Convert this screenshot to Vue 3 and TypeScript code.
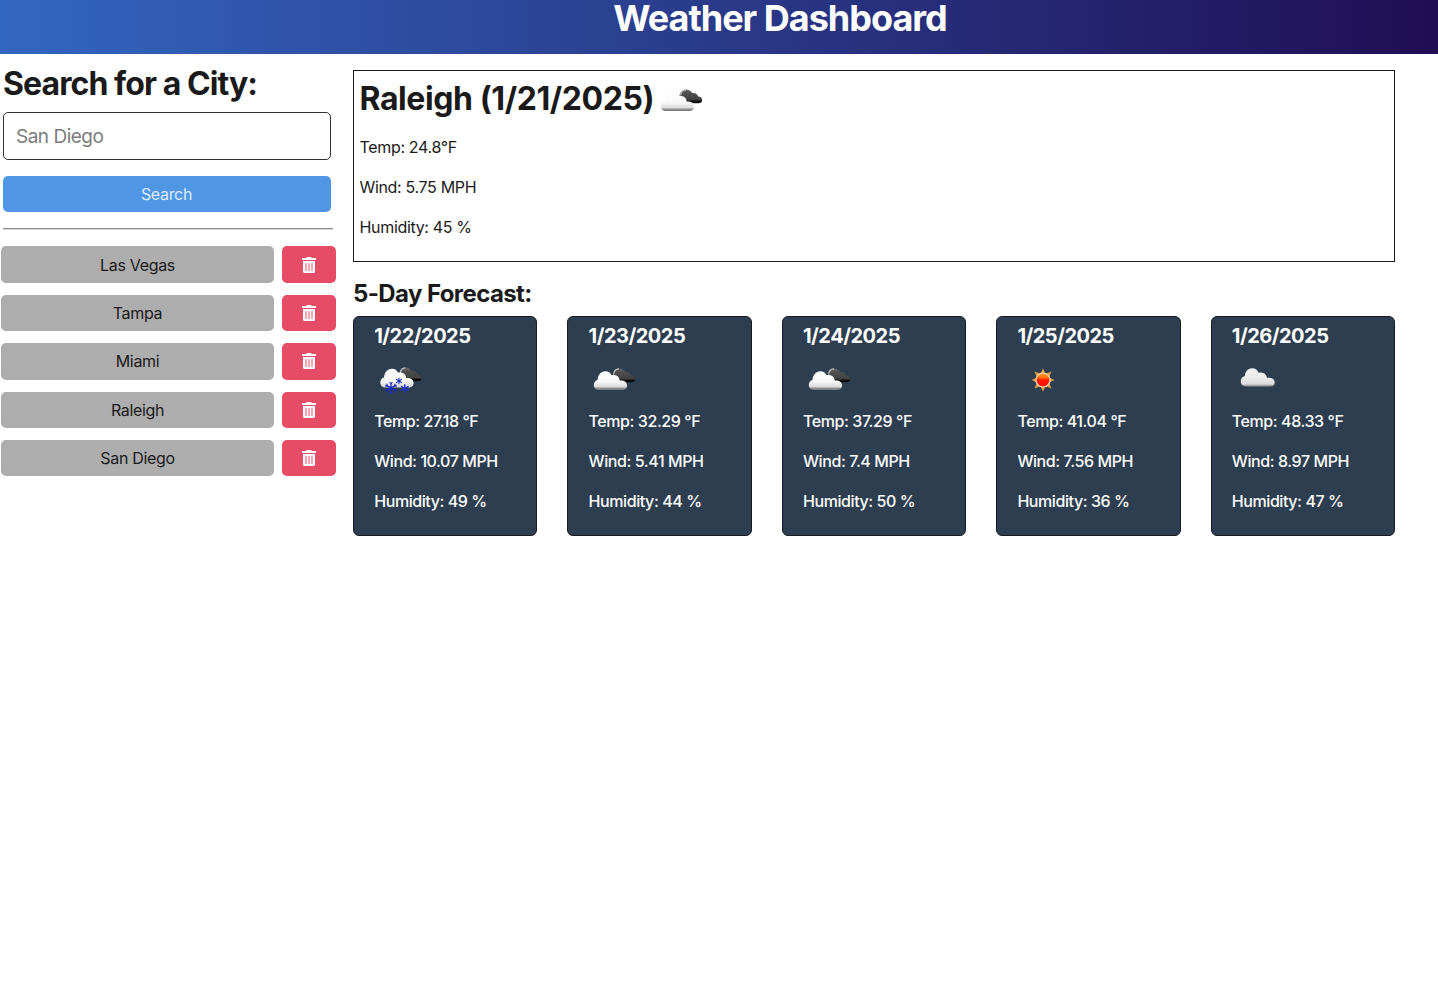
<script setup lang="ts">
import { ref } from 'vue'

type Condition = 'broken' | 'snow' | 'sun' | 'cloud'

interface Forecast {
  date: string
  icon: Condition
  temp: string
  wind: string
  humidity: number
}

const query = ref('')
const cities = ref<string[]>(['Las Vegas', 'Tampa', 'Miami', 'Raleigh', 'San Diego'])

const forecast: Forecast[] = [
  { date: '1/22/2025', icon: 'snow', temp: '27.18', wind: '10.07', humidity: 49 },
  { date: '1/23/2025', icon: 'broken', temp: '32.29', wind: '5.41', humidity: 44 },
  { date: '1/24/2025', icon: 'broken', temp: '37.29', wind: '7.4', humidity: 50 },
  { date: '1/25/2025', icon: 'sun', temp: '41.04', wind: '7.56', humidity: 36 },
  { date: '1/26/2025', icon: 'cloud', temp: '48.33', wind: '8.97', humidity: 47 },
]

function removeCity(city: string) {
  cities.value = cities.value.filter((c) => c !== city)
}
</script>

<template>
  <div class="app">
    <svg class="defs" aria-hidden="true">
      <defs>
        <linearGradient id="white-cloud" x1="0" y1="0" x2="0" y2="1">
          <stop offset="0" stop-color="#ffffff" />
          <stop offset="0.55" stop-color="#f8f8f8" />
          <stop offset="0.82" stop-color="#dcdcdc" />
          <stop offset="0.92" stop-color="#8c8c8c" />
          <stop offset="1" stop-color="#777777" />
        </linearGradient>
        <linearGradient id="snow-cloud" x1="0" y1="0" x2="0" y2="1">
          <stop offset="0" stop-color="#ffffff" />
          <stop offset="0.7" stop-color="#f4f4f4" />
          <stop offset="1" stop-color="#d0d0d0" />
        </linearGradient>
        <linearGradient id="plain-cloud" x1="0" y1="0" x2="0" y2="1">
          <stop offset="0" stop-color="#f2f2f2" />
          <stop offset="0.5" stop-color="#ededed" />
          <stop offset="0.86" stop-color="#dadada" />
          <stop offset="1" stop-color="#707070" />
        </linearGradient>
        <linearGradient id="dark-cloud" x1="0" y1="0" x2="0" y2="1">
          <stop offset="0" stop-color="#6a6a6a" />
          <stop offset="0.25" stop-color="#505050" />
          <stop offset="0.76" stop-color="#404040" />
          <stop offset="0.84" stop-color="#0c0c0c" />
          <stop offset="1" stop-color="#080808" />
        </linearGradient>
        <linearGradient id="sun-core" x1="0" y1="0" x2="0" y2="1">
          <stop offset="0" stop-color="#ff9d2e" />
          <stop offset="0.35" stop-color="#ff6a10" />
          <stop offset="0.5" stop-color="#fb1200" />
          <stop offset="1" stop-color="#ff1600" />
        </linearGradient>
        <g id="dark-back">
          <path d="M20 14C18 8 21 2.500 26 2.500c3 0 5 1.300 6.200 3.600 3-.5 5.400 1.100 6 3.500 2.400.1 4 1.600 4 3.400 0 2-1.600 3.300-3.700 3.300H24z" fill="url(#dark-cloud)" />
          <path d="M20.600 8.500C21 4.800 23 3 26 2.900" fill="none" stroke="#c4c4c4" stroke-width="1.200" />
        </g>
        <path id="front-shape" d="M5.800 24C3 24 .8 22 .8 19c0-2.600 1.500-4.700 3.700-5.100C4.900 9 8 5.200 12.300 5.200c3.200 0 5.200 1.600 6.500 4.100 4.300-1 7.600 1.400 7.900 5.200 4.400-.4 7.400 1.700 7.400 4.900 0 2.800-2.100 4.600-5 4.600z" />
        <g id="flake" fill="none" stroke="#1c2cc0">
          <path stroke-width="1.300" d="M0-6V6M-5.400-3.100 5.400 3.100M-5.400 3.100 5.400-3.100" />
          <path stroke-width=".8" d="M-1.800-5.800 0-4 1.800-5.800M-1.800 5.800 0 4 1.800 5.800M-5.900-1.200-3.400-2-4-4.500M5.900 1.200 3.400 2 4 4.500M-5.900 1.200-3.400 2-4 4.500M5.900-1.200 3.400-2 4-4.500" />
        </g>
        <g id="small-flake" fill="none" stroke="#2434c4" stroke-width="1.100">
          <path d="M0-3.200V3.200M-2.900-1.700 2.900 1.700M-2.900 1.700 2.900-1.700" />
        </g>
        <symbol id="icon-broken" viewBox="0 0 43 30">
          <use href="#dark-back" />
          <use href="#front-shape" fill="url(#white-cloud)" />
        </symbol>
        <symbol id="icon-snow" viewBox="0 0 43 30">
          <use href="#dark-back" x=".5" y="-1" />
          <use href="#front-shape" x=".5" y="-2.500" fill="url(#snow-cloud)" />
          <use href="#flake" x="12" y="22" />
          <use href="#small-flake" x="20" y="15" />
          <g transform="translate(25.800 22.500) scale(1.300)"><use href="#small-flake" /></g>
        </symbol>
        <symbol id="icon-sun" viewBox="0 0 43 30">
          <path d="M21 2.300l2.500 5.400 6-2.300-2.400 6L32.500 14l-5.400 2.600 2.400 6-6-2.400-2.500 5.500-2.500-5.500-6 2.400 2.400-6L9.500 14l5.400-2.600-2.400-6 6 2.300z" fill="#dd9a45" />
          <circle cx="21" cy="14" r="7" fill="url(#sun-core)" stroke="#fbdfb6" stroke-width="1.200" />
        </symbol>
        <symbol id="icon-cloud" viewBox="0 0 43 30">
          <path d="M9.500 20.700C6 20.700 3.800 18.400 3.800 15.500c0-2.900 1.500-5 4.100-5.500C8.200 5.200 11.200 2.200 15.200 2.200c3.300 0 5.400 1.800 6.500 4.500 4-1.100 7.900 1.300 8.300 5.200 4.400-.8 7.700 1.200 7.700 4.500 0 2.700-2 4.300-5 4.300z" fill="url(#plain-cloud)" />
        </symbol>
        <symbol id="icon-trash" viewBox="0 0 448 512">
          <path fill="#fff" d="M32 464a48 48 0 0 0 48 48h288a48 48 0 0 0 48-48V128H32zm272-256a16 16 0 0 1 32 0v224a16 16 0 0 1-32 0zm-96 0a16 16 0 0 1 32 0v224a16 16 0 0 1-32 0zm-96 0a16 16 0 0 1 32 0v224a16 16 0 0 1-32 0zM432 32H312l-9.400-18.700A24 24 0 0 0 281.100 0H166.800a23.700 23.700 0 0 0-21.400 13.300L136 32H16A16 16 0 0 0 0 48v32a16 16 0 0 0 16 16h416a16 16 0 0 0 16-16V48a16 16 0 0 0-16-16z" />
        </symbol>
      </defs>
    </svg>

    <header class="banner">
      <h1>Weather Dashboard</h1>
    </header>

    <div class="columns">
      <aside class="sidebar">
        <form class="search" @submit.prevent>
          <h2>Search for a City:</h2>
          <input v-model="query" type="text" placeholder="San Diego" />
          <button type="submit" class="btn search-btn">Search</button>
        </form>
        <hr />
        <div class="history">
          <div v-for="city in cities" :key="city" class="entry">
            <button type="button" class="btn city-btn">{{ city }}</button>
            <button type="button" class="btn delete-btn" :aria-label="`Remove ${city}`" @click="removeCity(city)">
              <svg class="trash"><use href="#icon-trash" /></svg>
            </button>
          </div>
        </div>
      </aside>

      <main class="content">
        <section class="today">
          <div class="today-head">
            <h2>Raleigh (1/21/2025)</h2>
            <svg class="weather-icon"><use href="#icon-broken" /></svg>
          </div>
          <p>Temp: 24.8°F</p>
          <p>Wind: 5.75 MPH</p>
          <p>Humidity: 45 %</p>
        </section>

        <h4 class="forecast-title">5-Day Forecast:</h4>
        <section class="forecast">
          <article v-for="day in forecast" :key="day.date" class="card">
            <h5>{{ day.date }}</h5>
            <svg class="weather-icon"><use :href="`#icon-${day.icon}`" /></svg>
            <p>Temp: {{ day.temp }} °F</p>
            <p>Wind: {{ day.wind }} MPH</p>
            <p>Humidity: {{ day.humidity }} %</p>
          </article>
        </section>
      </main>
    </div>
  </div>
</template>

<style>
body {
  margin: 0;
  background: #fff;
}
</style>

<style scoped>
.app {
  min-height: 986px;
  color: #1a1a1a;
  font: 16px/24px Inter, "Liberation Sans", sans-serif;
  letter-spacing: -0.33px;
}
.app * {
  box-sizing: border-box;
}
.defs {
  display: block;
  width: 0;
  height: 0;
}
h1, h2, h4, h5, p {
  margin: 0;
}
.banner {
  height: 54px;
  padding-left: 122px;
  background: linear-gradient(90deg, #3366c0 0%, #200e53 100%);
  color: #fff;
  text-align: center;
}
h1 {
  font-size: 36px;
  line-height: 36px;
  font-weight: 700;
  letter-spacing: -1px;
}
h2 {
  font-size: 32px;
  line-height: 38px;
  font-weight: 700;
  letter-spacing: -0.42px;
}
.search h2 {
  padding-top: 1px;
  letter-spacing: -0.92px;
}
.columns {
  display: flex;
}
.sidebar {
  width: 336px;
  padding-top: 10px;
}
.search {
  display: flex;
  flex-direction: column;
  width: 331px;
  padding-left: 3px;
}
input {
  height: 48px;
  margin: 9px 0 16px;
  padding: 0 12px;
  border: 1px solid #333;
  border-radius: 5px;
  background: #fff;
  color: #1a1a1a;
  font: inherit;
  font-size: 19px;
  letter-spacing: -0.5px;
}
input::placeholder {
  color: #7b7b7b;
  opacity: 1;
}
.btn {
  border: 0;
  border-radius: 5px;
  padding: 0;
  font: inherit;
  letter-spacing: inherit;
}
.search-btn {
  height: 36px;
  padding-right: 1px;
  background: #4f96e5;
  color: #dcecfb;
}
hr {
  width: 330px;
  height: 2px;
  margin: 16px 0 16.4px 3px;
  border: 0;
  border-top: 1px solid #8e8e8e;
  border-bottom: 1px solid #d8d8d8;
}
.history {
  display: flex;
  flex-direction: column;
  gap: 12px;
  padding-left: 1px;
}
.entry {
  display: flex;
  gap: 8px;
  height: 36.4px;
}
.city-btn {
  width: 273px;
  background: #adadad;
  color: #1a1a1a;
}
.delete-btn {
  display: flex;
  align-items: center;
  justify-content: center;
  width: 54px;
  background: #e74c66;
}
.trash {
  width: 14px;
  height: 16px;
}
.content {
  width: 1042px;
  margin-left: 17px;
  padding-top: 16px;
}
.today {
  height: 192px;
  padding: 9px 5.5px;
  border: 1px solid #1a1a1a;
}
.today-head {
  display: flex;
  align-items: center;
  gap: 6px;
  height: 38px;
  margin-bottom: 17px;
}
.today-head .weather-icon {
  margin-top: 6px;
}
.today p {
  margin-bottom: 16px;
}
.weather-icon {
  display: block;
  width: 43px;
  height: 30px;
}
.forecast-title {
  margin-top: 17px;
  font-size: 24px;
  line-height: 30px;
  font-weight: 700;
  letter-spacing: -0.6px;
}
.forecast {
  display: grid;
  grid-template-columns: repeat(5, 1fr);
  gap: 30px;
  margin-top: 7px;
}
.card {
  height: 220px;
  padding: 7px 0 0 20.2px;
  border: 1px solid #161c22;
  border-radius: 6px;
  background: #2d3e50;
  color: #fff;
}
.card h5 {
  font-size: 20px;
  line-height: 24px;
  font-weight: 700;
  letter-spacing: -0.5px;
}
.card .weather-icon {
  margin: 18px 0 13px 4.8px;
}
.card p {
  margin-bottom: 16px;
  line-height: 24px;
  font-weight: 500;
  letter-spacing: -0.42px;
}
</style>
